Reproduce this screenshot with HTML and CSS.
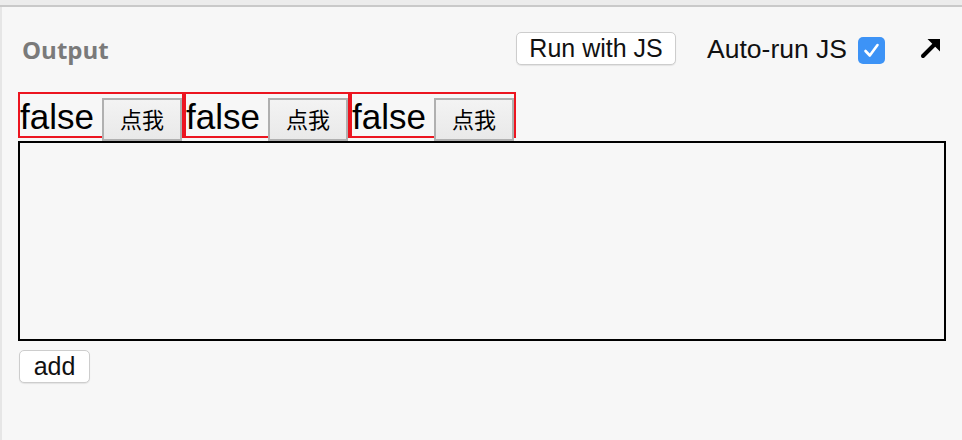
FILE: index.html
```html
<!DOCTYPE html>
<html>
<head>
<meta charset="utf-8">
<link rel="stylesheet" href="styles.css">
</head>
<body>
<div class="topbar"></div>
<div class="panel">
  <div class="header">
    <div class="title">Output</div>
    <div class="tools">
      <button class="btn run">Run with JS</button>
      <label class="auto">Auto-run JS <span class="check"><svg viewBox="0 0 27 27" width="27" height="27"><path d="M7.5 14 L11.8 18.5 L19.5 8" fill="none" stroke="#fff" stroke-width="2.6" stroke-linecap="round" stroke-linejoin="round"/></svg></span></label>
      <svg class="expand" viewBox="0 0 22 22" width="22" height="22"><path d="M3 19 L15 7" stroke="#000" stroke-width="4" stroke-linecap="round"/><path d="M7.5 2 L20 2 L20 14.5 Z" fill="#000"/></svg>
    </div>
  </div>
  <div class="row">
    <div class="comp"><span class="val">false</span><button class="tap">点我</button></div>
    <div class="comp"><span class="val">false</span><button class="tap">点我</button></div>
    <div class="comp"><span class="val">false</span><button class="tap">点我</button></div>
  </div>
  <div class="area"></div>
  <button class="btn add">add</button>
</div>
</body>
</html>
```
FILE: styles.css
```css
html, body {
  margin: 0;
  padding: 0;
  background: #f7f7f7;
  font-family: "Liberation Sans", Arial, sans-serif;
}
.topbar {
  height: 5px;
  background: #ececec;
  border-bottom: 2px solid #c9c9c9;
}
.panel {
  border-left: 2px solid #e6e6e6;
  padding: 0 16px 0 16px;
  height: 433px;
  box-sizing: border-box;
}
.header {
  height: 85px;
  display: flex;
  align-items: center;
  justify-content: space-between;
}
.title {
  font-family: "Open Sans", sans-serif;
  font-weight: 700;
  font-size: 24px;
  color: #7a7a7a;
  margin-left: 4px;
  margin-top: -1px;
}
.tools {
  display: flex;
  align-items: center;
  padding-right: 4px;
}
.btn {
  font-family: "Liberation Sans", Arial, sans-serif;
  font-size: 25px;
  color: #111;
  background: #fff;
  border: 1px solid #cdcdcd;
  border-radius: 5px;
  box-shadow: 0 1px 1px rgba(0,0,0,0.08);
  padding: 0;
}
.run {
  width: 160px;
  height: 33px;
  margin-top: -2px;
}
.auto {
  display: flex;
  align-items: center;
  margin-left: 31px;
  font-size: 26.5px;
  color: #111;
}
.check {
  display: flex;
  width: 27px;
  height: 27px;
  margin-left: 11px;
  margin-top: 2px;
  background: #3d93f6;
  border-radius: 5px;
}
.expand {
  margin-left: 35px;
  margin-top: -4px;
}
.row {
  display: flex;
}
.comp {
  display: flex;
  align-items: flex-start;
  height: 42px;
  border: 2px solid #ec1520;
}
.val {
  width: 82px;
  padding-top: 2px;
  font-size: 35px;
  line-height: 42px;
  color: #000;
}
.tap {
  width: 80px;
  height: 43px;
  margin-top: 4px;
  padding: 0 0 4px 0;
  font-family: "Noto Sans CJK SC", sans-serif;
  font-size: 22px;
  color: #000;
  background: linear-gradient(#f3f3f3, #e9e9e9);
  border: 2px solid #b0b0b0;
  border-radius: 0;
}
.area {
  margin-top: 3px;
  height: 196px;
  border: 2px solid #000;
}
.add {
  margin-top: 9px;
  margin-left: 1px;
  width: 71px;
  height: 33px;
}
```
